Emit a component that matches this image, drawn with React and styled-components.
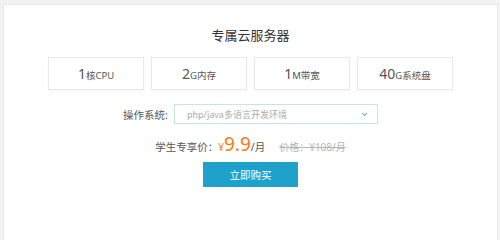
import React from 'react'
import styled, { createGlobalStyle } from 'styled-components'

const Global = createGlobalStyle`
  html, body {
    margin: 0;
    padding: 0;
    background: #f2f2f2;
    overflow: hidden;
  }
  body {
    font-family: "Noto Sans", "Noto Sans CJK SC", sans-serif;
  }
`

const Card = styled.section`
  margin: 4px 2px 0 3px;
  height: calc(100vh - 4px);
  background: #fff;
  border: 1px solid #e8e8e8;
  border-bottom: 0;
  box-sizing: border-box;
  padding-top: 21px;
  display: flex;
  flex-direction: column;
  align-items: center;
`

const Title = styled.h2`
  margin: 0;
  font-size: 13px;
  line-height: 18px;
  font-weight: 400;
  color: #333;
`

const Specs = styled.div`
  margin-top: 13px;
  display: grid;
  grid-template-columns: repeat(4, 96px);
  gap: 7px;
`

const Spec = styled.div`
  height: 33px;
  box-sizing: border-box;
  border: 1px solid #e9e9e9;
  box-shadow: 0 1px 2px rgba(0, 0, 0, 0.04);
  display: flex;
  align-items: baseline;
  justify-content: center;
  padding-top: 7px;
  color: #555;
`

const Num = styled.span`
  font-size: 14px;
  line-height: 18px;
`

const Unit = styled.span`
  font-size: 9.5px;
  line-height: 18px;
`

const Row = styled.div`
  display: flex;
  align-items: center;
  margin-top: ${({ $gap }) => $gap}px;
`

const Label = styled.span`
  font-size: 10.5px;
  color: #555;
  margin-right: 6px;
`

const Select = styled.div`
  width: 204px;
  height: 20px;
  box-sizing: border-box;
  border: 1px solid #c4e4ec;
  display: flex;
  align-items: center;
  justify-content: space-between;
  padding: 0 9px 0 12px;
  font-size: 9px;
  color: #aaa;
`

const Price = styled.div`
  height: 20px;
  display: flex;
  align-items: baseline;
  color: #555;
  font-size: 10.5px;
`

const Orange = styled.span`
  color: #ff7a14;
  font-size: ${({ $size }) => $size}px;
  line-height: 20px;
`

const Old = styled.span`
  margin-left: 14px;
  color: #b5b5b5;
  font-size: 10px;
  text-decoration: line-through;
`

const Buy = styled.button`
  margin-top: 8px;
  width: 95px;
  height: 25px;
  border: 0;
  background: #1ea2cc;
  color: #fff;
  font-family: inherit;
  font-size: 10.5px;
  cursor: pointer;
`

const specs = [
  ['1', '核CPU'],
  ['2', 'G内存'],
  ['1', 'M带宽'],
  ['40', 'G系统盘'],
]

export default function App() {
  return (
    <>
      <Global />
      <Card>
        <Title>专属云服务器</Title>
        <Specs>
          {specs.map(([n, u]) => (
            <Spec key={u}>
              <Num>{n}</Num>
              <Unit>{u}</Unit>
            </Spec>
          ))}
        </Specs>
        <Row $gap={14}>
          <Label>操作系统:</Label>
          <Select>
            <span>php/java多语言开发环境</span>
            <svg width="7" height="5" viewBox="0 0 7 5">
              <path d="M1 1l2.5 2.5L6 1" fill="none" stroke="#7fb9c9" strokeWidth="1.2" />
            </svg>
          </Select>
        </Row>
        <Row $gap={10}>
          <Price>
            学生专享价：
            <Orange $size={10}>¥</Orange>
            <Orange $size={19}>9.9</Orange>
            <span>/月</span>
            <Old>价格：¥108/月</Old>
          </Price>
        </Row>
        <Buy>立即购买</Buy>
      </Card>
    </>
  )
}
